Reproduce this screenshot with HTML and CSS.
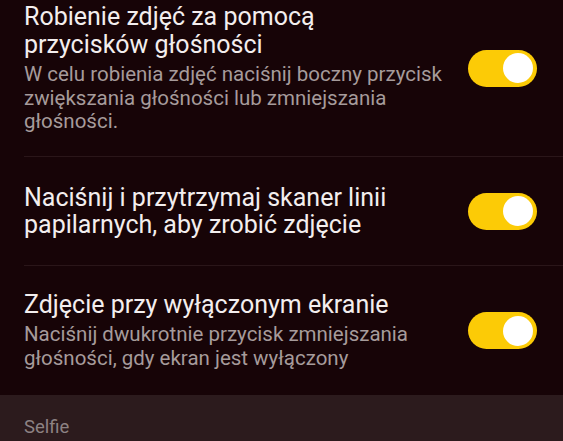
FILE: index.html
```html
<!DOCTYPE html>
<html lang="pl">
<head>
<meta charset="utf-8">
<link rel="stylesheet" href="styles.css">
</head>
<body>
<div class="screen">
  <div class="item first">
    <div class="text">
      <div class="title">Robienie zdjęć za pomocą przycisków głośności</div>
      <div class="sub">W celu robienia zdjęć naciśnij boczny przycisk zwiększania głośności lub zmniejszania głośności.</div>
    </div>
    <div class="toggle"><div class="knob"></div></div>
  </div>
  <div class="item mid">
    <div class="text">
      <div class="title">Naciśnij i przytrzymaj skaner linii papilarnych, aby zrobić zdjęcie</div>
    </div>
    <div class="toggle"><div class="knob"></div></div>
  </div>
  <div class="item last">
    <div class="text">
      <div class="title">Zdjęcie przy wyłączonym ekranie</div>
      <div class="sub">Naciśnij dwukrotnie przycisk zmniejszania głośności, gdy ekran jest wyłączony</div>
    </div>
    <div class="toggle"><div class="knob"></div></div>
  </div>
  <div class="section">Selfie</div>
</div>
</body>
</html>
```
FILE: styles.css
```css
html, body {
  margin: 0;
  padding: 0;
  background: #170407;
}
.screen {
  width: 563px;
  height: 441px;
  overflow: hidden;
  background: #170407;
  font-family: Roboto, "Noto Sans", sans-serif;
  display: flex;
  flex-direction: column;
}
.item {
  display: flex;
  align-items: center;
  margin-left: 24px;
  padding: 0 26px 0 0;
  border-bottom: 1px solid #2a1619;
  flex: none;
}
.item.first {
  padding-top: 3px;
  padding-bottom: 22px;
}
.item.mid {
  padding-top: 27px;
  padding-bottom: 26px;
}
.item.last {
  padding-top: 25px;
  padding-bottom: 23px;
  border-bottom: none;
}
.text {
  flex: 1;
  min-width: 0;
  padding-right: 24px;
}
.title {
  color: #f3eeee;
  font-size: 25px;
  line-height: 27.6px;
}
.sub {
  color: #a69b9b;
  font-size: 20.5px;
  line-height: 23.5px;
  margin-top: 5px;
}
.toggle {
  flex: none;
  width: 69px;
  height: 37px;
  border-radius: 19px;
  background: #fccb06;
  display: flex;
  align-items: center;
  justify-content: flex-end;
  padding-right: 4px;
  box-sizing: border-box;
}
.knob {
  width: 30px;
  height: 30px;
  border-radius: 50%;
  background: #ffffff;
}
.section {
  margin-top: auto;
  height: 46px;
  flex: none;
  background: #2c1b1d;
  color: #8d8283;
  font-size: 18.5px;
  padding: 22px 24px 0;
  box-sizing: border-box;
  line-height: 20px;
}
```
